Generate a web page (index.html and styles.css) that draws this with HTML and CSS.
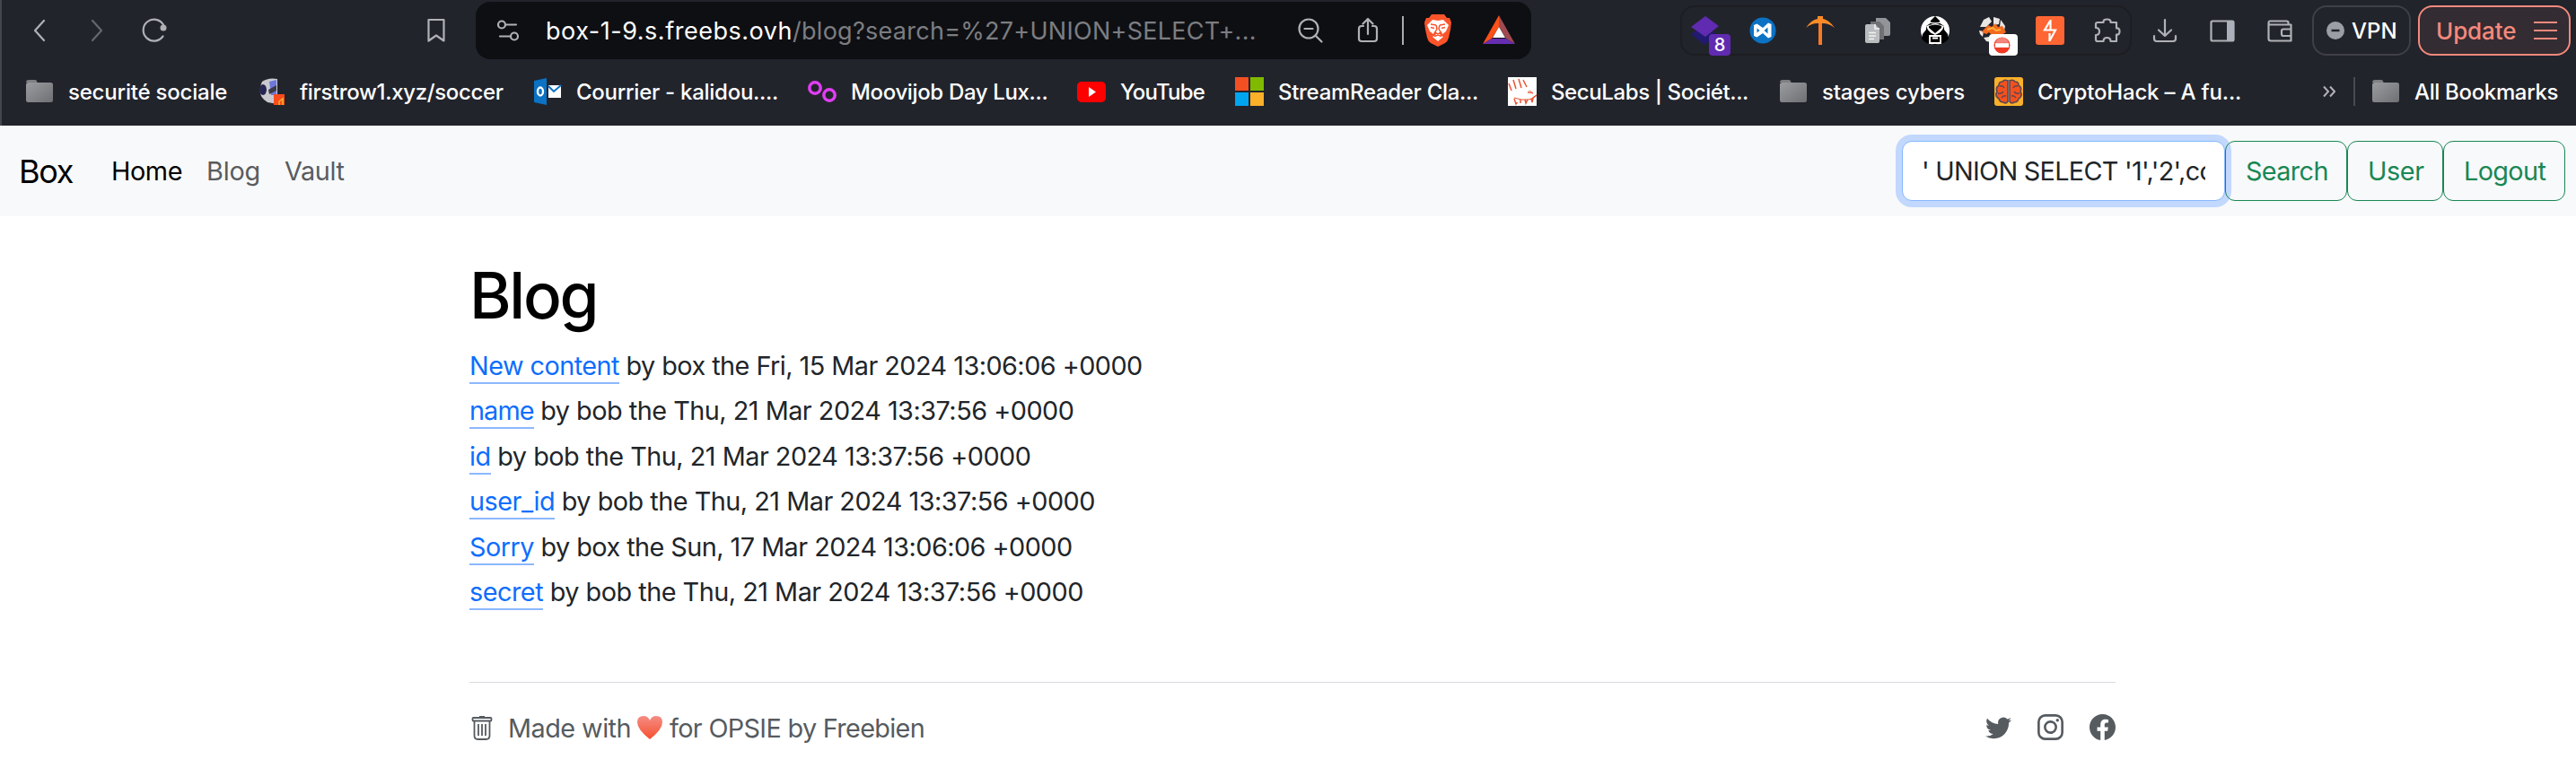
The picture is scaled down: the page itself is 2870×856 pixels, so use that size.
FILE: index.html
```html
<!DOCTYPE html>
<html lang="en">
<head>
<meta charset="utf-8">
<title>Blog</title>
<link rel="stylesheet" href="styles.css">
</head>
<body>
<svg class="defs" width="0" height="0" aria-hidden="true">
  <defs>
    <linearGradient id="folderFill" x1="0" y1="0" x2="1" y2="1"><stop offset="0" stop-color="#9b9ca0"/><stop offset="1" stop-color="#6f7074"/></linearGradient>
    <linearGradient id="heartFill" x1="0" y1="0" x2="0" y2="1"><stop offset="0" stop-color="#f58d84"/><stop offset="1" stop-color="#f5502f"/></linearGradient>
    <symbol id="folder" viewBox="0 0 32 32"><path d="M1 6q0-3 3-3h7q2 0 2.500 3z" fill="#7e7f83"/><rect x="1" y="6" width="30" height="22" rx="2.500" fill="url(#folderFill)"/></symbol>
  </defs>
</svg>

<header class="browser">
  <div class="toolbar">
    <svg class="ico" viewBox="0 0 32 32"><path class="ln" d="M21 5l-10 11 10 11"/></svg>
    <svg class="ico fwd" viewBox="0 0 32 32"><path class="ln" d="M11 5l10 11-10 11"/></svg>
    <svg class="ico" viewBox="0 0 32 32"><path class="ln" d="M26 9.500A12 12 0 1 0 25.500 22.500"/><circle cx="26" cy="13" r="3.500" fill="#b0b1b5"/></svg>
    <svg class="ico save" viewBox="0 0 32 32"><path class="ln" d="M7.500 4h17v23.500L16 21.500l-8.500 6z"/></svg>
    <div class="address">
      <svg class="ico" viewBox="0 0 32 32"><g class="ln"><circle cx="9" cy="9.500" r="4"/><path d="M14 9.500h11M7 22.500h11"/><circle cx="23" cy="22.500" r="4"/></g></svg>
      <div class="url"><span class="host">box-1-9.s.freebs.ovh</span><span class="path">/blog?search=%27+UNION+SELECT+...</span></div>
      <svg class="ico zoom" viewBox="0 0 32 32"><g class="ln"><circle cx="14" cy="14" r="10.500"/><path d="M21.500 21.500l7 7M9.500 14h9"/></g></svg>
      <svg class="ico share" viewBox="0 0 32 32"><path class="ln" d="M11 11H9q-3 0-3 3v11q0 3 3 3h14q3 0 3-3V14q0-3-3-3h-2M16 20V3M10.500 8.500L16 3l5.500 5.500"/></svg>
      <span class="sep"></span>
      <svg class="ico brave" viewBox="0 0 32 36"><path d="M9 0h14l3 4h3l2 5-1 8-2 9q-1 4-4 6l-8 4-8-4q-3-2-4-6L2 17 1 9l2-5h3z" fill="#fb542b"/><path d="M10 6l6 1 6-1 6 6-3 7-4 3-1-3-3 2 3 3 2 1-6 5-6-5 2-1 3-3-3-2-1 3-4-3-3-7z" fill="#fff"/><path d="M8 11l6 1M24 11l-6 1M14 12l1 4-2 4 3 2 3-2-2-4 1-4M8 14.500l4 1M24 14.500l-4 1M12 24.500l4-1.500 4 1.500" fill="none" stroke="#fb542b" stroke-width="1.500"/></svg>
      <svg class="ico bat" viewBox="0 0 36 32"><path d="M18 0v13L10 26 0 32z" fill="#ff5018"/><path d="M18 0v13l8 13 10 6z" fill="#9e4a50"/><path d="M0 32l10-6h16l10 6z" fill="#662db0"/><path d="M18 13l7 12H11z" fill="#fff"/></svg>
    </div>
    <div class="extensions">
      <span class="ext"><svg class="ico" viewBox="0 0 32 32"><path d="M0 20l16-10 14 12-15 10z" fill="#211a70"/><path d="M16 0l15 11-15 12L0 12z" fill="#602bb0"/></svg><b class="badge">8</b></span>
      <svg class="ico" viewBox="0 0 32 32"><circle cx="16" cy="16" r="14.500" fill="#0b72c4"/><path d="M6 10l3.500-1.500L16 13l6-5.500 3.500 1.500v14L22 24.500 16 19l-6.500 4.500L6 22zM9.500 13.500v5l3-2.500zM21.500 12.500L17.500 16l4 3.500z" fill="#fff" fill-rule="evenodd"/></svg>
      <svg class="ico" viewBox="0 0 32 32"><path d="M14 6h4v26h-4z" fill="#f87a24"/><path d="M0 13Q6 4 13 3V0h6v3q7 1 13 10-6-5-13-5h-6Q6 8 0 13z" fill="#fa8b27"/></svg>
      <svg class="ico" viewBox="0 0 32 32"><path d="M14 2h11l5 5v13q0 2-2 2H14z" fill="#929497"/><path d="M8 6h10l5 5v15H8z" fill="#6f7175"/><path d="M4 9h9l5 5v14q0 2-2 2H4q-2 0-2-2V11q0-2 2-2z" fill="#babdc0"/><path d="M13 9v5h5M6 18.500h8M6 22h8M6 25.500h6" stroke="#f2f2f2" stroke-width="1.600" fill="none"/></svg>
      <svg class="ico" viewBox="0 0 32 32"><circle cx="16" cy="16" r="16" fill="#fff"/><path d="M16 0l5 5 .5 3 4.500 3 0 4 4 5 1 5q-5 7-15 7T1 25l1-5 4-5v-4l4.500-3L11 5z" fill="#000"/><path d="M9 6.500q7 3 14 0" stroke="#fff" stroke-width="1.300" fill="none"/><path d="M6 11l5-1.500 5-1 5 1 5 1.500q-1 4-5 7.500l-5 2.500-5-2.500q-4-3.500-5-7.500z" fill="#fff"/><path d="M9 11q7-3 14 0l0 2-7 6-7-6z" fill="#000"/><path d="M10 22h12v8H10zM13 24.500h6" stroke="#fff" stroke-width="1.800" fill="none"/></svg>
      <span class="ext"><svg class="ico" viewBox="0 0 32 32"><path d="M2 12l4-8 6-3 3 5-6 6zM17 1l7 2-1 6-6 1zM25 4l5 7-1 5-5-4zM1 16l5 1-1 6-3-3zM6 24l6-1 2 6-5-1z" fill="#e9e6e4"/><path d="M6 15l5-5 4 2 4-4 3 4 5-1 4 7-7 4h-8l-4-4-3 2-5-2z" fill="#f36a1e"/><path d="M10 15l6-2 4 3 5-1" stroke="#ffb43c" stroke-width="2" fill="none"/></svg><i class="badge blocked"><svg viewBox="0 0 20 20"><circle cx="10" cy="10" r="9.500" fill="#ee3b24"/><path d="M2 7Q4 1 10 1t8 6z" fill="#f2877c"/><rect x="2" y="7.500" width="16" height="5" fill="#fff"/></svg></i></span>
      <svg class="ico" viewBox="0 0 32 32"><rect width="32" height="32" rx="3" fill="#ff6633"/><path d="M16.500 4v9M16.500 4.500L10 15.500h8M15.500 28v-9M15.500 27.500L22 15.500h-4M16.500 12v3.500" stroke="#fff" stroke-width="2.200" fill="none"/></svg>
      <svg class="ico" viewBox="0 0 32 32"><path class="ln" d="M5 7h6.500q-.5-3.500 4-3.500t4 3.500H26v6.500q3.500-.5 3.500 3.500T26 20.500V28h-6.500q0-4-4-4t-4 4H5q-2 0-2-2v-5q4 0 4-4t-4-4V9q0-2 2-2z"/></svg>
    </div>
    <div class="tools">
      <svg class="ico" viewBox="0 0 32 32"><path class="ln" d="M16 4v18M9 15.500l7 6.500 7-6.500M4 22v3q0 3 3 3h18q3 0 3-3v-3"/></svg>
      <svg class="ico" viewBox="0 0 32 32"><rect class="ln" x="3.500" y="5.500" width="25" height="22" rx="1.500"/><path d="M21 5h7v23h-7z" fill="#a9b0ba"/></svg>
      <svg class="ico" viewBox="0 0 32 32"><path class="ln" d="M25.500 9V7q0-1.500-2-1.500H5Q3.500 5.500 3.500 8v17q0 2.500 2.500 2.500h22.500V9.500H6Q3.500 9.500 3.500 8M28.500 14.500H20q-2 0-2 2V20q0 2 2 2h8.500"/></svg>
    </div>
    <div class="vpn"><svg viewBox="0 0 20 20"><circle cx="10" cy="10" r="10" fill="#9c9ea6"/><path d="M5.500 10h9" stroke="#22242c" stroke-width="2.500"/></svg><span>VPN</span></div>
    <div class="update"><span>Update</span><svg viewBox="0 0 26 22"><path d="M0 2h26M0 11h26M0 20h26" stroke="#f4897d" stroke-width="2"/></svg></div>
  </div>

  <nav class="bookmarks">
    <a class="bm"><svg class="ico"><use href="#folder"/></svg><span class="t20">securité sociale</span></a>
    <a class="bm"><svg class="ico" viewBox="0 0 32 32"><path d="M6 5q7-5 17-3v28l-11-2Q-1 20 6 5z" fill="#c9c9cf"/><path d="M14 5l8-2v17h-6z" fill="#6d78dc"/><ellipse cx="7" cy="14" rx="4" ry="6" fill="#262653"/><path d="M13 14l9-5v6l-8 4z" fill="#3a3a48"/><path d="M19 19h12v12H19z" fill="#fb4b1c"/><path d="M25 31v-4l4-3v7" stroke="#ffb030" stroke-width="1.500" fill="none"/></svg><span class="t35">firstrow1.xyz/soccer</span></a>
    <a class="bm"><svg class="ico" viewBox="0 0 32 32"><path d="M17 9h14v14H17z" fill="#fff"/><path d="M17 10l6 6 8-7" stroke="#0b72c4" stroke-width="2" fill="none"/><path d="M1 4l14-3v30L1 28z" fill="#0b72c4"/><ellipse cx="8" cy="16" rx="3" ry="4.500" fill="none" stroke="#fff" stroke-width="2.300"/></svg><span class="t27">Courrier - kalidou....</span></a>
    <a class="bm"><svg class="ico" viewBox="0 0 32 32"><g fill="none" stroke="#e23df5" stroke-width="3.500"><circle cx="8" cy="12" r="6.200"/><circle cx="24" cy="20" r="6.200"/></g></svg><span class="t35">Moovijob Day Lux...</span></a>
    <a class="bm"><svg class="ico" viewBox="0 0 32 32"><rect y="5" width="32" height="23" rx="5" fill="#f00"/><path d="M13 11v11l8-5.500z" fill="#fff"/></svg><span class="t80">YouTube</span></a>
    <a class="bm"><svg class="ico" viewBox="0 0 32 32"><path d="M0 0h15v15H0z" fill="#f25022"/><path d="M17 0h15v15H17z" fill="#7fba00"/><path d="M0 17h15v15H0z" fill="#00a4ef"/><path d="M17 17h15v15H17z" fill="#fbb02a"/></svg><span class="t30">StreamReader Cla...</span></a>
    <a class="bm"><svg class="ico" viewBox="0 0 32 32"><path d="M0 0h32v32H0z" fill="#fff"/><path d="M1 7l3 8M6 3l3 10M12 2l3 10M17 3l4 8M7 24l2 6 1.500-2M14 25v4M19 25l1 4 2-4M26 24l1 4 1-5 4-3" stroke="#ea5433" stroke-width="1.500" fill="none"/><path d="M7 23q8 3 16 2 6-1 9-5M22 17q3-3 6 1z" stroke="#ea5433" fill="none"/></svg><span class="t40">SecuLabs | Sociét...</span></a>
    <a class="bm"><svg class="ico"><use href="#folder"/></svg><span class="t20">stages cybers</span></a>
    <a class="bm"><svg class="ico" viewBox="0 0 32 32"><rect width="32" height="32" rx="3" fill="#fbb02a"/><path d="M15 4q-4-2-6 1-4 0-4 4-4 3-2 7-3 5 2 8 1 4 5 4 3 2 5-1zM17 4q4-2 6 1 4 0 4 4 4 3 2 7 3 5-2 8-1 4-5 4-3 2-5-1z" fill="#f4511e" stroke="#5f4650" stroke-width="1.600"/><path d="M15 3h2v25h-2z" fill="#6d6a70"/><path d="M6 10q4-1 5 2M4 18q4 1 6-2M8 23q2-3 5-2M26 10q-4-1-5 2M28 18q-4 1-6-2M24 23q-2-3-5-2" fill="none" stroke="#5f4650" stroke-width="1.400"/></svg><span class="t18">CryptoHack – A fu...</span></a>
    <svg class="more" viewBox="0 0 14 14"><path d="M1 1.500L6 7l-5 5.500M8 1.500L13 7l-5 5.500" fill="none" stroke="#b0b1b5" stroke-width="2"/></svg>
    <a class="bm all"><svg class="ico"><use href="#folder"/></svg><span class="t35">All Bookmarks</span></a>
  </nav>
</header>

<nav class="navbar">
  <a class="brand">Box</a>
  <a class="link active">Home</a>
  <a class="link blog">Blog</a>
  <a class="link vault">Vault</a>
  <form class="search">
    <input class="field" type="text" value="' UNION SELECT '1','2',column_name">
    <button type="button" class="btn s">Search</button><button type="button" class="btn u">User</button><button type="button" class="btn l">Logout</button>
  </form>
</nav>

<main class="container">
  <h1>Blog</h1>
  <ul class="posts">
    <li class="tight"><a>New content</a> by box the Fri, 15 Mar 2024 13:06:06 +0000</li>
    <li><a class="name">name</a> by bob the Thu, 21 Mar 2024 13:37:56 +0000</li>
    <li><a>id</a> by bob the Thu, 21 Mar 2024 13:37:56 +0000</li>
    <li><a>user_id</a> by bob the Thu, 21 Mar 2024 13:37:56 +0000</li>
    <li class="tight"><a>Sorry</a> by box the Sun, 17 Mar 2024 13:06:06 +0000</li>
    <li><a>secret</a> by bob the Thu, 21 Mar 2024 13:37:56 +0000</li>
  </ul>
  <footer class="footer">
    <svg class="trash" viewBox="0 0 24 28"><g fill="none" stroke="#565b60" stroke-width="1.800"><rect x="1.500" y="3" width="21" height="3.500" rx="1"/><path d="M3.500 7v16q0 4 4 4h9q4 0 4-4V7M8 10v13M12 10v13M16 10v13M9 2h6"/></g></svg>
    <span class="made">Made with</span>
    <svg class="heart" viewBox="0 0 28 28"><path d="M14 27Q0 16 0 8 0 1 7 1q5 0 7 5 2-5 7-5 7 0 7 7 0 8-14 19z" fill="url(#heartFill)"/></svg>
    <span class="for">for OPSIE by Freebien</span>
    <div class="social">
      <svg viewBox="0 0 16 16"><path d="M5.026 15c6.038 0 9.341-5.003 9.341-9.334 0-.14 0-.282-.006-.422A6.685 6.685 0 0 0 16 3.542a6.658 6.658 0 0 1-1.889.518 3.301 3.301 0 0 0 1.447-1.817 6.533 6.533 0 0 1-2.087.793A3.286 3.286 0 0 0 7.875 6.030a9.325 9.325 0 0 1-6.767-3.429 3.289 3.289 0 0 0 1.018 4.382A3.323 3.323 0 0 1 .64 6.575v.045a3.288 3.288 0 0 0 2.632 3.218 3.203 3.203 0 0 1-.865.115 3.230 3.230 0 0 1-.614-.057 3.283 3.283 0 0 0 3.067 2.277A6.588 6.588 0 0 1 .780 13.580a6.320 6.320 0 0 1-.780-.045A9.344 9.344 0 0 0 5.026 15z"/></svg>
      <svg viewBox="0 0 16 16"><g fill="none" stroke="#565b60" stroke-width="1.450"><rect x=".75" y=".75" width="14.500" height="14.500" rx="4"/><circle cx="8" cy="8" r="3.400"/></g><circle cx="12.300" cy="3.700" r=".95"/></svg>
      <svg viewBox="0 0 16 16"><path d="M16 8.049c0-4.446-3.582-8.050-8-8.050C3.580 0-.002 3.603-.002 8.050c0 4.017 2.926 7.347 6.750 7.951v-5.625h-2.030V8.050H6.750V6.275c0-2.017 1.195-3.131 3.022-3.131.876 0 1.791.157 1.791.157v1.980h-1.009c-.993 0-1.303.621-1.303 1.258v1.510h2.218l-.354 2.326H9.250V16c3.824-.604 6.750-3.934 6.750-7.951z"/></svg>
    </div>
  </footer>
</main>
</body>
</html>
```
FILE: styles.css
```css
* { box-sizing: border-box; }
body {
  margin: 0;
  height: 856px;
  overflow: hidden;
  background: #fff;
  color: #212529;
  font-family: Inter, "Liberation Sans", sans-serif;
  font-size: 28.8px;
}
.defs { position: absolute; }
svg { display: block; flex: none; }
a { color: inherit; text-decoration: none; }

.browser { height: 140px; background: #22242c; border-left: 2px solid #45464b; color: #fff; }
.toolbar { display: flex; align-items: center; height: 68px; padding-left: 26px; }
.ico { width: 32px; height: 32px; }
.ln { fill: none; stroke: #b0b1b5; stroke-width: 2.200; stroke-linecap: round; stroke-linejoin: round; }
.toolbar > .ico + .ico { margin-left: 32px; }
.fwd .ln { stroke: #66676c; }
.toolbar > .ico.save { margin-left: 282px; }
.address { display: flex; align-items: center; flex: none; width: 1176px; height: 64px; margin-left: 28px; padding-left: 20px; border-radius: 16px; background: #0e0f13; }
.url { width: 836px; margin-left: 26px; font-size: 27px; white-space: nowrap; }
.host { letter-spacing: 0.52px; }
.path { color: #7c7d81; letter-spacing: 0.27px; }
.share { margin-left: 32px; }
.sep { width: 2px; height: 32px; margin: 0 22px; background: #a9abaf; }
.brave { height: 36px; }
.bat { width: 36px; margin: -2px 0 0 34px; }
.extensions { display: flex; align-items: center; flex: none; gap: 32px; width: 503px; height: 56px; margin-left: 166px; padding-left: 10px; border: 2px solid #1d1e22; border-radius: 16px; }
.ext { position: relative; }
.badge { position: absolute; left: 20px; top: 20px; width: 24px; height: 24px; border-radius: 4px; background: #602bb0; font-size: 20px; font-weight: 500; line-height: 25px; text-align: center; }
.blocked { left: 12px; width: 32px; padding: 3px 5px; background: #fff; }
.blocked svg { width: 19px; height: 19px; }
.tools { display: flex; gap: 32px; margin-left: 21px; }
.vpn, .update { display: flex; align-items: center; flex: none; height: 56px; border: 2px solid #3f4046; border-radius: 16px; }
.vpn { width: 110px; margin-left: 20px; padding-left: 14px; font-size: 24px; font-weight: 500; }
.vpn svg { width: 20px; height: 20px; margin-right: 8px; }
.update { width: 170px; margin-left: 8px; padding-left: 18px; border-color: #f4897d; background: #332c32; color: #f4897d; font-size: 26px; font-weight: 500; }
.update span { width: 109px; letter-spacing: -0.1px; }
.update svg { width: 26px; height: 22px; }

.bookmarks { display: grid; grid-template-columns: 258px 308px 306px 300px 176px 304px 302px 240px 366px 34px 1fr; align-items: center; height: 68px; padding-left: 26px; font-size: 24px; font-weight: 500; }
.bm { display: flex; align-items: center; gap: 16px; white-space: nowrap; }
.t18 { letter-spacing: -0.18px; }
.t20 { letter-spacing: -0.2px; }
.t27 { letter-spacing: -0.27px; }
.t30 { letter-spacing: -0.3px; }
.t35 { letter-spacing: -0.35px; }
.t40 { letter-spacing: -0.4px; }
.t80 { letter-spacing: -0.8px; }
.more { width: 14px; height: 14px; }
.all { height: 32px; padding-left: 18px; border-left: 2px solid #4a4b51; }

.navbar { display: flex; align-items: center; height: 101px; padding: 0 12px 0 21px; background: #f8f9fa; color: #595c5f; white-space: nowrap; }
.brand { width: 103px; color: #000; font-size: 36px; letter-spacing: -1.33px; }
.link { letter-spacing: -0.4px; }
.active { width: 106px; color: #000; }
.blog { width: 87px; letter-spacing: -0.2px; }
.search { display: flex; height: 67px; margin-left: auto; }
.field { width: 360px; height: 67px; padding: 0 21px; border: 1px solid #86b7fe; border-radius: 11px; outline: none; background: #fff; box-shadow: 0 0 0 7px #c2d8fe; color: #212529; font: inherit; letter-spacing: -0.7px; }
.btn { height: 67px; padding: 0 0 0 22px; border: 1px solid #198754; border-radius: 11px; background: #f8f9fa; color: #198754; font: inherit; letter-spacing: -0.62px; text-align: left; }
.s { width: 136px; background: none; }
.u { width: 107px; letter-spacing: -0.4px; }
.l { width: 136px; }

.container { width: 1834px; margin-left: 523px; white-space: nowrap; }
h1 { margin: 0; padding-top: 45px; color: #000; font-size: 71px; font-weight: 550; line-height: 86px; letter-spacing: -2.3px; }
.posts { margin: 0; padding: 11px 0 0; list-style: none; letter-spacing: -0.49px; }
.posts .tight { letter-spacing: -0.53px; }
.posts li { height: 50.400px; line-height: 50.400px; white-space: pre; }
.posts a { padding-bottom: 1px; border-bottom: 2px solid #8bb8fe; color: #0d6efd; }
.posts .name { letter-spacing: -0.9px; }
.footer { display: flex; align-items: center; height: 101px; margin-top: 75px; border-top: 1px solid #d8dbde; color: #565b60; fill: #565b60; }
.trash { width: 24px; height: 28px; margin: -1px 17px 0 2px; }
.made { letter-spacing: -0.52px; }
.heart { width: 28px; height: 28px; margin: 0 8px 0 7px; }
.for { letter-spacing: -0.66px; }
.social { display: flex; gap: 29px; margin: -1px 0 0 auto; }
.social svg { width: 29px; height: 29px; }
```
